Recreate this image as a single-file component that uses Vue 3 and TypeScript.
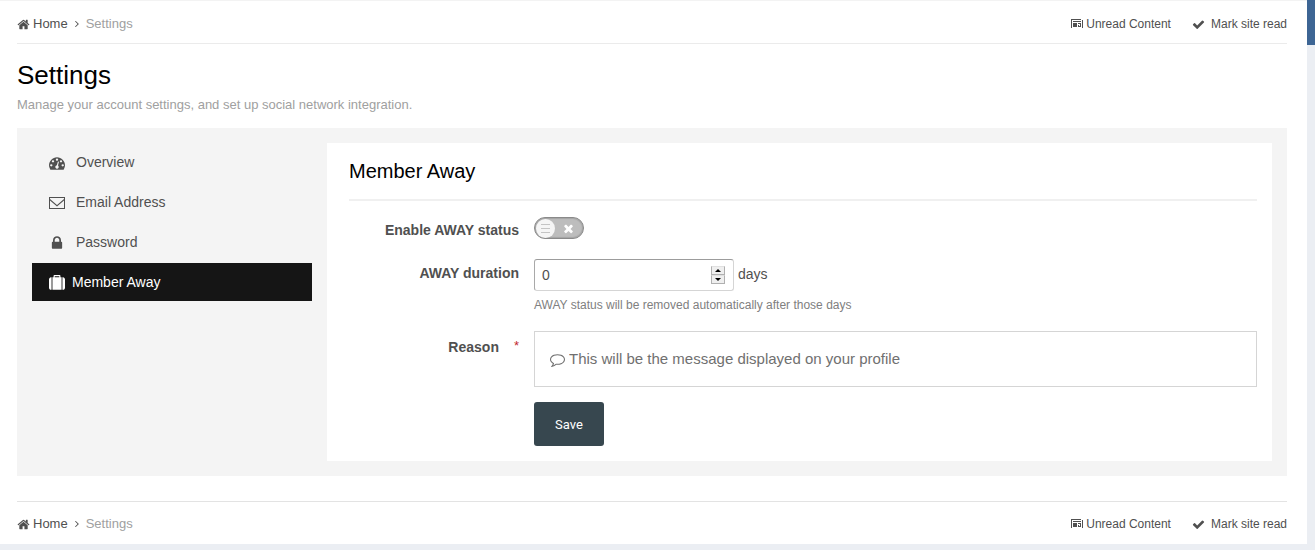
<script setup lang="ts">
import { ref } from 'vue'

interface Glyph { box: string; path: string }

const glyphs: Record<string, Glyph> = {
  home: { box: '0 0 1792 1792', path: 'M1472 992v480q0 26-19 45t-45 19h-384v-384h-256v384h-384q-26 0-45-19t-19-45v-480q0-1 .5-3t.5-3l575-474 575 474q1 2 1 6zm223-69l-62 74q-8 9-21 11h-3q-13 0-21-7l-692-577-692 577q-12 8-24 7-13-2-21-11l-62-74q-8-10-7-23.500t11-21.500l719-599q32-26 76-26t76 26l244 204v-195q0-14 9-23t23-9h192q14 0 23 9t9 23v408l219 182q10 8 11 21.500t-7 23.500z' },
  angle: { box: '576 256 640 1280', path: 'M1171 896q0 13-10 23l-466 466q-10 10-23 10t-23-10l-50-50q-10-10-10-23t10-23l393-393-393-393q-10-10-10-23t10-23l50-50q10-10 23-10t23 10l466 466q10 10 10 23z' },
  news: { box: '0 0 12 10', path: 'M0 0h10v1H0zM0 1h1v8H0zM2 2h8v1H2zM2 4h4v4H2zM7 4h3v1H7zM7 6h1v1H7zM7 7h3v1H7zM9 4h1v4H9zM11 1h1v8h-1z' },
  check: { box: '0 0 1792 1792', path: 'M1671 566q0 40-28 68l-724 724-136 136q-28 28-68 28t-68-28l-136-136-362-362q-28-28-28-68t28-68l136-136q28-28 68-28t68 28l294 295 656-657q28-28 68-28t68 28l136 136q28 28 28 68z' },
  times: { box: '0 0 1792 1792', path: 'M1490 1322q0 40-28 68l-136 136q-28 28-68 28t-68-28l-294-294-294 294q-28 28-68 28t-68-28l-136-136q-28-28-28-68t28-68l294-294-294-294q-28-28-28-68t28-68l136-136q28-28 68-28t68 28l294 294 294-294q28-28 68-28t68 28l136 136q28 28 28 68t-28 68l-294 294 294 294q28 28 28 68z' },
  dashboard: { box: '0 0 1792 1792', path: 'M384 1152q0-53-37.500-90.500t-90.500-37.500-90.500 37.500-37.500 90.500 37.500 90.500 90.500 37.500 90.500-37.500 37.500-90.500zm192-448q0-53-37.500-90.500t-90.500-37.500-90.500 37.500-37.500 90.500 37.500 90.500 90.500 37.500 90.500-37.500 37.500-90.500zm428 481l101-382q6-26-7.500-48.500t-38.500-29.500-48 6.500-30 39.500l-101 382q-60 5-107 43.500t-63 98.500q-20 77 20 146t117 89 146-20 89-117q16-60-6-117t-72-91zm660-33q0-53-37.500-90.500t-90.500-37.500-90.500 37.500-37.500 90.500 37.500 90.500 90.500 37.500 90.500-37.500 37.500-90.500zm-640-640q0-53-37.500-90.500t-90.500-37.500-90.500 37.500-37.500 90.500 37.500 90.500 90.500 37.500 90.500-37.500 37.500-90.500zm448 192q0-53-37.500-90.500t-90.500-37.500-90.500 37.500-37.500 90.500 37.500 90.500 90.500 37.500 90.500-37.500 37.500-90.500zm320 448q0 261-141 483-19 29-54 29h-1402q-35 0-54-29-141-221-141-483 0-182 71-348t191-286 286-191 348-71 348 71 286 191 191 286 71 348z' },
  envelope: { box: '0 0 16 16', path: 'M0 2h16v12H0zM1 3v1l7 6 7-6V3zM1 5.500V13h14V5.500L8 11.500z' },
  lock: { box: '0 0 1792 1792', path: 'M640 768h512v-192q0-106-75-181t-181-75-181 75-75 181v192zm832 96v576q0 40-28 68t-68 28h-960q-40 0-68-28t-28-68v-576q0-40 28-68t68-28h32v-192q0-184 132-316t316-132 316 132 132 316v192h32q40 0 68 28t28 68z' },
  suitcase: { box: '0 0 1792 1792', path: 'M640 256h512v-128h-512v128zm-352 0v1408h-64q-92 0-158-66t-66-158v-960q0-92 66-158t158-66h64zm1120 0v1408h-1024v-1408h128v-160q0-40 28-68t68-28h576q40 0 68 28t28 68v160h128zm384 224v960q0 92-66 158t-158 66h-64v-1408h64q92 0 158 66t66 158z' },
  comment: { box: '0 0 1792 1792', path: 'M896 384q-204 0-381.500 69.500t-282 187.500-104.500 255q0 112 71.500 213.500t201.500 175.500l87 50-27 96q-24 91-70 172 152-63 275-171l43-38 57 6q69 8 130 8 204 0 381.500-69.500t282-187.500 104.500-255-104.500-255-282-187.500-381.500-69.500zm896 512q0 174-120 321.500t-326 233-450 85.500q-70 0-145-8-198 175-460 242-49 14-114 22h-5q-15 0-27-10.500t-16-27.500v-1q-3-4-.5-12t2-10 4.500-9.500l6-9 7-8.500 8-9q7-8 31-34.500t34.500-38 31-39.500 32.500-51 27-59 26-76q-157-89-247.500-220t-90.500-281q0-174 120-321.500t326-233 450-85.500 450 85.500 326 233 120 321.500z' },
}

const menu = [
  { icon: 'dashboard', label: 'Overview' },
  { icon: 'envelope', label: 'Email Address' },
  { icon: 'lock', label: 'Password' },
  { icon: 'suitcase', label: 'Member Away', active: true },
]

const away = ref(false)
const days = ref(0)
const reason = ref('')

function step(by: number) {
  days.value = Math.max(0, days.value + by)
}
</script>

<template>
  <div class="page">
    <div class="sheet">
      <nav v-for="place in ['top', 'bottom']" :key="place" class="crumbs" :class="place" :aria-label="`Breadcrumb ${place}`">
        <a href="#" class="home"><svg class="i13" :viewBox="glyphs.home.box"><path :d="glyphs.home.path" /></svg>Home</a>
        <svg class="angle" :viewBox="glyphs.angle.box"><path :d="glyphs.angle.path" /></svg>
        <span class="here">Settings</span>
        <a href="#" class="unread"><svg class="news" :viewBox="glyphs.news.box"><path :d="glyphs.news.path" /></svg>Unread Content</a>
        <a href="#" class="mark"><svg class="i13" :viewBox="glyphs.check.box"><path :d="glyphs.check.path" /></svg>Mark site read</a>
      </nav>

      <header class="title">
        <h1>Settings</h1>
        <p>Manage your account settings, and set up social network integration.</p>
      </header>

      <main class="panel">
        <nav class="menu" aria-label="Settings sections">
          <a v-for="item in menu" :key="item.label" href="#" :class="{ active: item.active }">
            <svg :viewBox="glyphs[item.icon].box"><path fill-rule="evenodd" :d="glyphs[item.icon].path" /></svg>
            <span>{{ item.label }}</span>
          </a>
        </nav>

        <form class="card" @submit.prevent>
          <h2>Member Away</h2>
          <div class="row status">
            <label class="name" for="away">Enable AWAY status</label>
            <span class="switch" :class="{ on: away }">
              <input id="away" v-model="away" type="checkbox" />
              <span class="knob"><i></i><i></i><i></i></span>
              <svg class="cross" :viewBox="glyphs.times.box"><path :d="glyphs.times.path" /></svg>
            </span>
          </div>
          <div class="row duration">
            <label class="name" for="days">AWAY duration</label>
            <div>
              <div class="amount">
                <span class="number">
                  <input id="days" v-model.number="days" type="number" min="0" />
                  <span class="spin">
                    <button type="button" aria-label="Increase" @click="step(1)"><svg viewBox="0 0 6 3"><path d="M0 3L3 0l3 3z" /></svg></button>
                    <button type="button" aria-label="Decrease" @click="step(-1)"><svg viewBox="0 0 6 3"><path d="M0 0l3 3 3-3z" /></svg></button>
                  </span>
                </span>
                <span class="unit">days</span>
              </div>
              <p class="hint">AWAY status will be removed automatically after those days</p>
            </div>
          </div>
          <div class="row reason">
            <label class="name" for="reason">Reason<span class="star">*</span></label>
            <div class="message">
              <svg :viewBox="glyphs.comment.box"><path :d="glyphs.comment.path" /></svg>
              <input id="reason" v-model="reason" type="text" placeholder="This will be the message displayed on your profile" />
            </div>
          </div>
          <button class="save" type="submit">Save</button>
        </form>
      </main>
    </div>
    <div class="rail"></div>
  </div>
</template>

<style>
body { margin: 0; background: #ebeef3; }
</style>

<style scoped>
* { box-sizing: border-box; }
.page {
  display: flex;
  align-items: flex-start;
  font: 13px/18px "Liberation Sans", Arial, sans-serif;
  color: #505050;
}
.sheet {
  flex: 1;
  min-width: 0;
  display: flex;
  flex-direction: column;
  padding: 0 20px 0 17px;
  background: #fff;
  border-top: 1px solid #f3f3f3;
}
.rail { width: 8px; height: 45px; background: #3d6594; }
svg { display: block; flex: none; fill: currentColor; }
a { color: inherit; text-decoration: none; }
h1, h2, p { margin: 0; font-weight: 400; }

.crumbs { display: flex; align-items: center; height: 43px; padding-top: 2px; }
.crumbs.top { padding-top: 4px; border-bottom: 1px solid #ebebeb; }
.crumbs.bottom { order: 1; margin-top: 25px; border-top: 1px solid #e3e3e3; }
.crumbs a { display: flex; align-items: center; }
.home { gap: 3px; }
.i13 { width: 13px; height: 13px; }
.angle { width: 4px; height: 8px; margin: 0 7px; }
.here { color: #a0a0a0; }
.unread { gap: 3px; margin-left: auto; font-size: 12px; }
.news { width: 12px; height: 10px; }
.mark { gap: 6px; margin-left: 21px; font-size: 12px; }

.title { padding-top: 15px; }
h1 { color: #000; font-size: 26px; line-height: 32px; }
.title p { margin-top: 5px; color: #a0a0a0; }

.panel { display: flex; gap: 15px; margin-top: 14px; padding: 15px; background: #f4f4f4; }
.menu { display: flex; flex-direction: column; gap: 2px; width: 280px; flex: none; font-size: 14px; }
.menu a { display: flex; align-items: center; gap: 11px; height: 38px; padding-left: 17px; }
.menu svg { width: 16px; height: 16px; margin-top: 2px; }
.menu .active { gap: 7px; background: #151515; color: #fff; }

.card { flex: 1; min-width: 0; padding: 13px 15px 15px 22px; background: #fff; }
h2 { padding-bottom: 13px; border-bottom: 2px solid #f0f0f0; color: #000; font-size: 20px; line-height: 30px; }
.row { display: grid; grid-template-columns: 170px minmax(0, 1fr); column-gap: 15px; }
.name { text-align: right; font-weight: 700; font-size: 14px; }
.status { padding-top: 16px; }
.status .name { padding-top: 4px; }
.switch {
  position: relative;
  display: flex;
  align-items: center;
  justify-content: space-between;
  width: 50px;
  height: 22px;
  padding: 0 8px 0 1px;
  border: 1px solid #8a8a8a;
  border-radius: 11px;
  background: #bdbdbd;
  box-shadow: inset 0 0 1px 1px #a5a5a5;
}
.switch.on { flex-direction: row-reverse; padding: 0 1px 0 8px; background: #6a994e; }
.switch input { position: absolute; inset: 0; width: 100%; height: 100%; margin: 0; opacity: 0; }
.knob {
  display: flex;
  flex-direction: column;
  align-items: center;
  justify-content: center;
  gap: 3px;
  width: 19px;
  height: 19px;
  border-radius: 10px;
  background: #f5f5f5;
}
.knob i { width: 9px; height: 1px; background: #c4c4c4; }
.cross { width: 13px; height: 13px; color: #fff; }

.duration { margin-top: 20px; }
.duration .name { padding-top: 5px; }
.amount { display: flex; align-items: center; gap: 4px; font-size: 14px; }
.unit { padding-bottom: 2px; }
.number {
  display: flex;
  align-items: center;
  width: 200px;
  height: 32px;
  padding: 0 8px 0 7px;
  border: 1px solid #d5d5d5;
  border-top-color: #9c9c9c;
  border-left-color: #a9a9a9;
  border-radius: 3px;
}
.number input {
  flex: 1;
  min-width: 0;
  padding: 0;
  border: 0;
  outline: 0;
  background: none;
  color: #505050;
  font: inherit;
  appearance: textfield;
}
.number input::-webkit-inner-spin-button { appearance: none; margin: 0; }
.spin { display: grid; width: 14px; height: 18px; }
.spin button {
  display: flex;
  align-items: center;
  justify-content: center;
  height: 9px;
  padding: 0;
  border: 1px solid #b0b0b0;
  border-top-color: #e0e0e0;
  background: #efefef;
  color: #000;
}
.spin svg { width: 6px; height: 3px; }
.hint { margin-top: 5px; color: #808080; font-size: 12px; }

.reason { margin-top: 17px; }
.reason .name { display: flex; justify-content: flex-end; padding-top: 7px; }
.star { margin-left: 15px; color: #c1272d; font-size: 13px; font-weight: 400; line-height: 16px; }
.message {
  display: flex;
  align-items: center;
  gap: 4px;
  height: 56px;
  padding: 0 15px;
  border: 1px solid #d5d5d5;
  color: #707070;
}
.message svg { width: 15px; height: 15px; }
.message input { flex: 1; min-width: 0; padding: 0; border: 0; outline: 0; background: none; color: #505050; font: inherit; font-size: 15px; }
.message input::placeholder { color: #707070; opacity: 1; }
.save {
  display: block;
  height: 44px;
  margin: 15px 0 0 185px;
  padding: 0 21px;
  border: 0;
  border-radius: 3px;
  background: #37474f;
  color: #fff;
  font: 13px Roboto, sans-serif;
}
</style>
